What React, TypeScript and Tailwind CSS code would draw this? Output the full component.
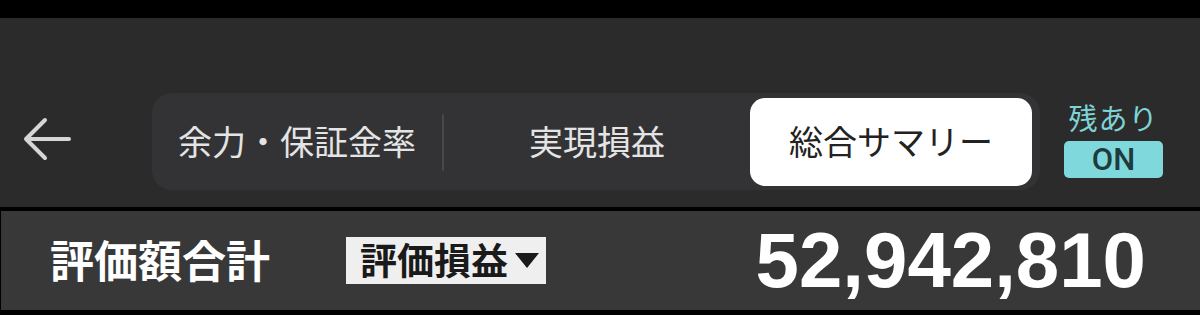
import React from "react";

const jp = { fontFamily: '"Noto Sans CJK JP", "Noto Sans", sans-serif' };
const num = { fontFamily: '"Liberation Sans", Arial, sans-serif' };
const rob = { fontFamily: 'Roboto, "Liberation Sans", sans-serif' };

export default function App() {
  return (
    <div className="w-[1200px] h-[315px] bg-black flex flex-col overflow-hidden" style={jp}>
      <div className="h-[18px] shrink-0" />
      <div className="h-[189px] shrink-0 bg-[#2b2b2b] flex items-start pt-[75px]">
        <div className="h-[97px] flex items-center">
          <svg className="ml-[22px] mb-[6px]" width="50" height="48" viewBox="0 0 50 48" fill="none">
            <path d="M4 24 H47 M23 5 L4 24 L23 43" stroke="#d6d6d6" strokeWidth="4" strokeLinecap="round" strokeLinejoin="round" />
          </svg>
        </div>
        <div className="ml-[80px] w-[888px] h-[97px] rounded-[20px] bg-[#333336] flex items-center pt-[1px]">
          <div className="w-[290px] text-center text-[34px] leading-none text-[#e4e4e4] pb-[3px]">余力・保証金率</div>
          <div className="w-[2px] h-[57px] bg-[#47474d] rounded-full" />
          <div className="w-[306px] text-center text-[34px] leading-none text-[#e4e4e4] pb-[3px]">実現損益</div>
          <div className="w-[282px] h-[88px] rounded-[15px] bg-white flex items-center justify-center text-[34px] leading-none text-[#222] pb-[3px]">
            総合サマリー
          </div>
        </div>
        <div className="ml-[24px] w-[99px] flex flex-col items-center pt-[10px]">
          <div className="text-[29px] leading-none text-[#7dd3d6] tracking-[1px]">残あり</div>
          <div className="mt-[9px] w-[99px] h-[37px] rounded-[5px] bg-[#7fd8db] flex items-center justify-center text-[31px] font-medium leading-none text-[#1f3b3d]" style={rob}>
            ON
          </div>
        </div>
      </div>
      <div className="h-[4px] shrink-0" />
      <div className="h-[99px] shrink-0 ml-[1px] bg-[#383838] flex items-center">
        <div className="ml-[49px] text-[44px] font-bold leading-none text-white pb-[4px]">評価額合計</div>
        <div className="ml-[76px] w-[200px] h-[47px] bg-[#efefef] flex items-center pl-[14px]">
          <span className="text-[37px] font-bold leading-none text-[#1a1a1a] pb-[3px]">評価損益</span>
          <svg className="ml-[6px]" width="26" height="17" viewBox="0 0 26 17">
            <path d="M1 1 H25 L13 16 Z" fill="#1a1a1a" />
          </svg>
        </div>
        <div className="flex-1 text-right pr-[54px] text-[78px] font-bold leading-none text-white pb-[2px]" style={num}>
          52,942,810
        </div>
      </div>
      <div className="flex-1" />
    </div>
  );
}
